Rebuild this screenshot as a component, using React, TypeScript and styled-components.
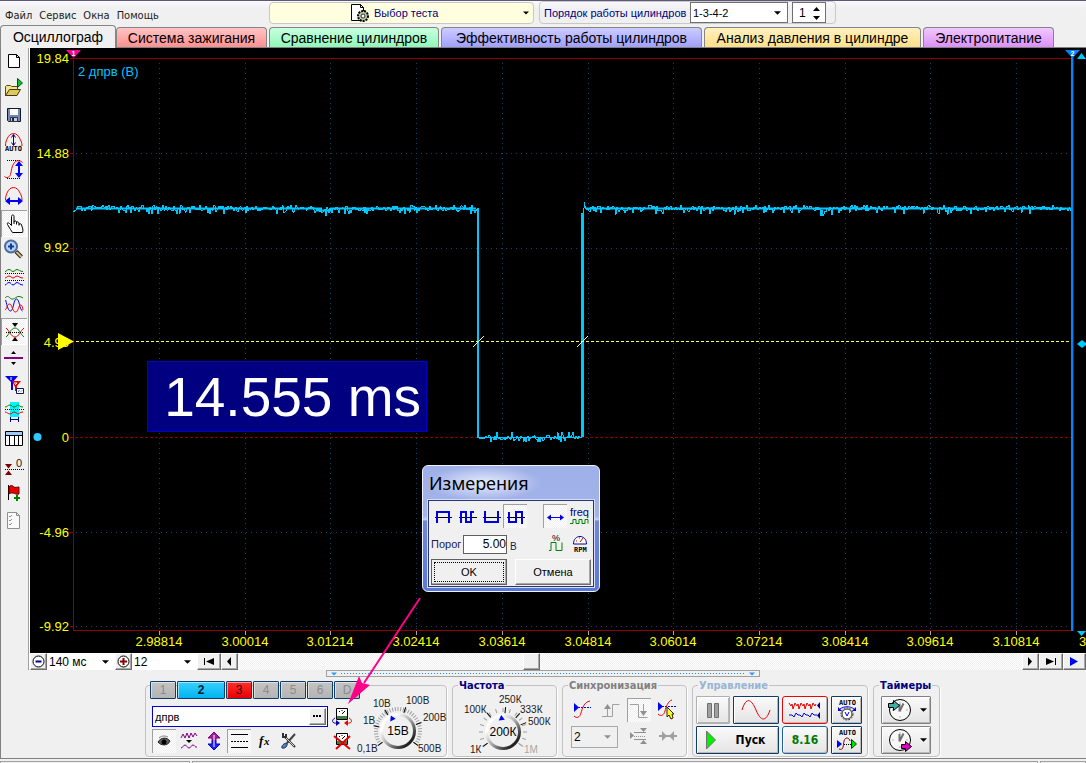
import React from "react";
import styled, { createGlobalStyle, css } from "styled-components";

const sans = '"Liberation Sans", Arial, sans-serif';
const tahoma = '"DejaVu Sans Condensed", "DejaVu Sans", sans-serif';
const face = "#f0f0f0";
const navy = "#000080";

const GlobalStyle = createGlobalStyle`
  * { box-sizing: border-box; }
  body { margin: 0; background: ${face}; font: 12px ${sans}; color: #000; }
  button, input, select { font: inherit; color: inherit; margin: 0; padding: 0; border-radius: 0; }
  svg { display: block; flex: none; }
`;

const hatch = css`
  background: repeating-conic-gradient(#ffffff 0 25%, #efefef 0 50%) 0 0 / 2px 2px;
`;
const raised = css`
  background: ${face};
  border: 1px solid;
  border-color: #fff #6e6e6e #6e6e6e #fff;
  box-shadow: inset -1px -1px 0 #a8a8a8;
`;

const Page = styled.div`
  position: relative;
  display: flex;
  flex-direction: column;
  min-height: 100vh;
  overflow: hidden;
  border-top: 1px solid #5a5a78;
`;

/* Menu line */
const TopBar = styled.header`
  display: flex;
  align-items: flex-start;
  height: 25px;
  background: linear-gradient(#faf8ff, ${face} 8px);
`;
const Menu = styled.nav`
  display: flex;
  gap: 7px;
  width: 269px;
  padding: 8px 0 0 5px;
  font: 11px/14px ${tahoma};
`;
const MenuLink = styled.a`
  color: #1c1c1c;
  text-decoration: none;
`;
const TestPicker = styled.button`
  display: flex;
  align-items: center;
  gap: 4px;
  width: 265px;
  height: 22px;
  margin: 1px 5px 0 0;
  padding: 0 4px 0 80px;
  border: 1px solid #c8c8c8;
  border-radius: 4px;
  background: #ffffdf;
  color: ${navy};
  font-size: 11px;
  text-align: left;
`;
const Grow = styled.span`
  flex: 1;
`;
const OrderBox = styled.div`
  display: flex;
  align-items: center;
  gap: 4px;
  height: 23px;
  padding: 0 9px 0 4px;
  border: 1px solid #c8c8c8;
  border-radius: 4px;
  color: ${navy};
  font-size: 11px;
`;
const OrderLabel = styled.label`
  width: 142px;
  white-space: nowrap;
`;
const Combo = styled.span<{ $w: number; $h: number; $line?: string }>`
  position: relative;
  display: inline-flex;
  width: ${(p) => p.$w}px;
  height: ${(p) => p.$h}px;
  border: ${(p) => (p.$line ? `1px solid ${p.$line}` : "0")};
  background: ${(p) => (p.$line === "#a8a8a8" ? face : "#fff")};
  color: #000;
  select {
    appearance: none;
    width: 100%;
    padding: 0 14px 0 2px;
    border: 0;
    background: transparent;
  }
  svg {
    position: absolute;
    right: 6px;
    top: calc(50% - 2px);
    pointer-events: none;
  }
`;
const Spinner = styled.span`
  display: flex;
  align-items: center;
  width: 34px;
  height: 21px;
  border: 1px solid #707070;
  background: #fff;
  color: #000;
  font-size: 12px;
  input {
    width: 19px;
    border: 0;
    padding-left: 6px;
    background: transparent;
  }
`;

/* Tabs */
const Tabs = styled.nav`
  display: flex;
  align-items: flex-end;
  gap: 2px;
  height: 22px;
  border-bottom: 1px solid #808080;
`;
const Tab = styled.button<{ $w: number; $from: string; $to: string; $on?: boolean }>`
  width: ${(p) => p.$w}px;
  height: ${(p) => (p.$on ? 23 : 20)}px;
  margin-bottom: ${(p) => (p.$on ? -1 : 0)}px;
  margin-right: ${(p) => (p.$on ? -2 : 0)}px;
  border: 1px solid #858585;
  border-bottom: 0;
  border-radius: 4px 4px 0 0;
  background: linear-gradient(${(p) => p.$from}, ${(p) => p.$to});
  font-size: 14px;
  line-height: 18px;
  white-space: nowrap;
`;

/* Main area */
const Workspace = styled.main`
  display: flex;
`;
const ToolBar = styled.aside`
  display: flex;
  flex-direction: column;
  flex: none;
  width: 30px;
  border-left: 1px solid #808080;
  border-right: 1px solid #fff;
  box-shadow: inset -1px 0 0 #a0a0a0;
`;
const Tool = styled.button<{ $on?: boolean }>`
  width: 26px;
  height: 27px;
  border: 0;
  background: transparent;
  padding: 0 1px;
  ${(p) =>
    p.$on &&
    css`
      ${hatch}
      box-shadow: inset 1px 1px 0 #a0a0a0, inset -1px -1px 0 #fff;
    `}
`;
const Stage = styled.div`
  position: relative;
  flex: 1;
  min-width: 0;
`;
const Screen = styled.div`
  background: #000;
  svg {
    width: 100%;
    height: auto;
  }
`;
const Readout = styled.output`
  position: absolute;
  left: 117px;
  top: 313px;
  width: 280px;
  padding: 2px 5px 0 0;
  border: 1px solid #0000c8;
  background: ${navy};
  color: #fff;
  font-size: 55px;
  line-height: 67px;
  text-align: right;
  white-space: nowrap;
`;

/* Measurement dialog */
const Dialog = styled.section`
  position: absolute;
  left: 392px;
  top: 417px;
  width: 178px;
  height: 127px;
  padding: 0 5px 5px;
  border: 1px solid #eef2ff;
  border-radius: 6px;
  background: linear-gradient(#9fb0e8, #a3b3ea 40%, #c3d0f4 43%, #7187dc 44%, #5a78d8);
`;
const DialogTitle = styled.h2`
  width: 112px;
  margin: 0;
  height: 34px;
  padding-left: 1px;
  font: 18px/34px "Noto Sans", sans-serif;
  background: radial-gradient(ellipse, #dde4f9 10%, rgba(200, 212, 245, 0) 72%);
`;
const DialogBody = styled.div`
  height: 87px;
  padding: 1px 2px;
  border: 1px solid #28386e;
  background: ${face};
  outline: 1px solid #d4defa;
`;
const DialogRow = styled.div<{ $h: number; $gap: number }>`
  display: flex;
  align-items: center;
  height: ${(p) => p.$h}px;
  gap: ${(p) => p.$gap}px;
`;
const ModeButton = styled.button<{ $on?: boolean }>`
  width: 24px;
  height: 24px;
  border: 0;
  background: transparent;
  ${(p) =>
    p.$on &&
    css`
      ${hatch}
      box-shadow: inset 1px 1px 0 #a0a0a0;
    `}
`;
const ThresholdInput = styled.input`
  width: 44px;
  height: 19px;
  border: 1px solid #606060;
  background: #fff;
  text-align: right;
`;
const ThresholdLabel = styled.label`
  width: 29px;
  font-size: 11px;
  white-space: nowrap;
  color: #202050;
`;
const Unit = styled.span`
  padding-top: 5px;
  font-size: 10px;
  color: #202050;
`;
const DialogButton = styled.button<{ $primary?: boolean }>`
  ${raised}
  width: 76px;
  height: 26px;
  font-size: 11px;
  border-color: ${(p) => (p.$primary ? "#606060" : "#fff #6e6e6e #6e6e6e #fff")};
  outline: ${(p) => (p.$primary ? "1px dotted #000" : "0")};
  outline-offset: -4px;
`;

/* Time scroll line */
const TimeRow = styled.div`
  display: flex;
  height: 17px;
  ${hatch}
`;
const SmallButton = styled.button<{ $w: number }>`
  ${raised}
  display: flex;
  align-items: center;
  justify-content: center;
  flex: none;
  width: ${(p) => p.$w}px;
  height: 17px;
`;
const Track = styled.div`
  flex: 1;
  display: flex;
  padding-left: 285px;
`;

/* Lower control deck */
const Deck = styled.footer`
  display: flex;
  flex-direction: column;
  align-items: center;
  padding-right: 2px;
  border-left: 1px solid #808080;
  border-bottom: 1px solid #808080;
`;
const Splitter = styled.div`
  display: flex;
  align-items: center;
  gap: 4px;
  width: 434px;
  height: 7px;
  padding: 0 4px;
  border: 1px solid #a0a0a0;
`;
const Dots = styled.span`
  flex: 1;
  height: 1px;
  background: repeating-linear-gradient(90deg, #1e90ff 0 1px, transparent 1px 3px);
`;
const Groups = styled.div`
  display: flex;
  gap: 5px;
  padding: 8px 0 1px;
`;
const Group = styled.section<{ $w: number }>`
  width: ${(p) => p.$w}px;
  height: 72px;
  border: 1px solid #c2c2c2;
  border-radius: 4px;
  box-shadow: 1px 1px 0 #fff;
`;
const GroupTitle = styled.h3<{ $c: string }>`
  width: max-content;
  margin: -6px 0 4px 5px;
  padding: 0 1px;
  background: ${face};
  color: ${(p) => p.$c};
  font: bold 11px/12px ${tahoma};
`;
const Channels = styled.div`
  display: flex;
  gap: 1px;
  margin: -5px 0 0 4px;
`;
const tones = {
  off: ["#c4c4c4", "#b4b4b4", "#8c8c8c"],
  cyan: ["#38d0ff", "#00b4f0", "#001c30"],
  red: ["#ff3030", "#e80000", "#300000"],
};
const Channel = styled.button<{ $tone: keyof typeof tones; $wide?: boolean }>`
  width: ${(p) => (p.$wide ? 48 : 26)}px;
  height: 18px;
  border: 1px solid #103c6c;
  border-radius: 1px;
  box-shadow: inset 1px 1px 0 rgba(255, 255, 255, 0.5);
  background: linear-gradient(${(p) => tones[p.$tone][0]}, ${(p) => tones[p.$tone][1]});
  color: ${(p) => tones[p.$tone][2]};
  font-weight: ${(p) => (p.$wide ? "bold" : "normal")};
  line-height: 14px;
`;
const ChannelBody = styled.div`
  display: flex;
  gap: 4px;
  padding-left: 6px;
`;
const Column = styled.div<{ $gap: number; $top: number; $w: number }>`
  display: flex;
  flex-direction: column;
  width: ${(p) => p.$w}px;
  gap: ${(p) => p.$gap}px;
  padding-top: ${(p) => p.$top}px;
`;
const NameField = styled.div`
  display: flex;
  align-items: center;
  height: 21px;
  padding-right: 1px;
  border: 1px solid #0000d0;
  background: #fff;
  input {
    flex: 1;
    min-width: 0;
    padding-left: 2px;
    border: 0;
    background: transparent;
    font-size: 11px;
  }
`;
const Line = styled.div<{ $gap: number }>`
  display: flex;
  align-items: center;
  gap: ${(p) => p.$gap}px;
`;
const IconButton = styled.button<{ $on?: boolean; $w?: number; $h?: number }>`
  display: flex;
  align-items: center;
  justify-content: center;
  flex: none;
  width: ${(p) => p.$w ?? 24}px;
  height: ${(p) => p.$h ?? 24}px;
  border: 0;
  background: transparent;
  ${(p) =>
    p.$on &&
    css`
      ${hatch}
      box-shadow: inset 1px 1px 0 #a0a0a0;
    `}
`;
const Grid = styled.div<{ $cols: string; $gap: string; $pad: number }>`
  display: grid;
  grid-template-columns: ${(p) => p.$cols};
  gap: ${(p) => p.$gap};
  padding-left: ${(p) => p.$pad}px;
`;
const Push = styled.button<{ $line: string; $span?: number; $round?: number }>`
  display: flex;
  align-items: center;
  justify-content: center;
  grid-column: span ${(p) => p.$span ?? 1};
  height: 28px;
  border: 1px solid ${(p) => p.$line};
  border-radius: ${(p) => p.$round ?? 1}px;
  box-shadow: inset 1px 1px 0 #fff, inset -1px -1px 0 #b8b8b8;
  background: linear-gradient(#fafafa, #e4e4e4);
  font: bold 12px ${tahoma};
`;
const RunLabel = styled.span`
  flex: 1;
  padding-right: 12px;
`;
const Rate = styled.span`
  color: #007800;
`;
const StatusBar = styled.div`
  display: grid;
  grid-template-columns: 190px 1fr 46px;
  gap: 2px;
  padding-top: 2px;
  height: 4px;
  span {
    border: 1px solid #a0a0a0;
    border-bottom: 0;
  }
`;
const Pointer = styled.svg`
  position: absolute;
  left: 340px;
  top: 590px;
  pointer-events: none;
`;

/* Drawing helpers */
const Down = ({ c = "#000", w = 7 }: { c?: string; w?: number }) => (
  <svg width={w} height="4" viewBox="0 0 8 4" aria-hidden="true">
    <path d="M0 0h8L4 4z" fill={c} />
  </svg>
);

const Art = ({ w = 24, h = 27, children }: { w?: number; h?: number; children: React.ReactNode }) => (
  <svg width={w} height={h} viewBox={`0 0 ${w} ${h}`} fill="none" aria-hidden="true">
    {children}
  </svg>
);

const dots = { stroke: "#000", strokeDasharray: "1 1" };

const tools: { name: string; on?: boolean; art: React.ReactNode }[] = [
  {
    name: "Новый",
    art: <path d="M6.5 6.5h8l3 3v10h-11zM14.5 6.5v3h3" fill="#fff" stroke="#000" />,
  },
  {
    name: "Открыть",
    art: (
      <>
        <path d="M3.5 20.5v-9l1-1h4l1 1h6v3" fill="#f4e48c" stroke="#5a4c10" />
        <path d="M3.5 20.5l4-6h11l-3.5 6z" fill="#e0c860" stroke="#40380c" />
        <path d="M15.5 3.5v9l5-4.5z" fill="#10c030" stroke="#005010" />
      </>
    ),
  },
  {
    name: "Сохранить",
    art: (
      <>
        <path d="M5.5 6.5h13v13h-12l-1-1z" fill="#7488b8" stroke="#10182c" />
        <path d="M8 7h8v6H8z" fill="#fff" />
        <path d="M8.5 15.5h7v4h-7z" fill="#c8ccd8" stroke="#303848" />
        <path d="M10 16h2v3h-2z" fill="#202838" />
      </>
    ),
  },
  {
    name: "Авто масштаб",
    art: (
      <>
        <path d="M3.5 17c0-4 1-6 2-8s3-4.500 6-4.500 5 2.500 6 4.500 2.500 4 2.500 8" stroke="#f00000" />
        <path d="M11.5 6v10M9.5 8.5l2-3 2 3M9.5 13.5l2 3 2-3" stroke={navy} />
        <text x="3" y="22" fontSize="7" fontFamily="DejaVu Sans Mono, monospace" fontWeight="bold" fill="#000">
          AUTO
        </text>
      </>
    ),
  },
  {
    name: "Масштаб по вертикали",
    art: (
      <>
        <path d="M5 4.5h13M5 22.5h13" {...dots} />
        <path d="M2.5 20.5c2 2 5 1 6-2s1-9 4-12 6-2 8 0" stroke="#f00000" />
        <path d="M17 6v15" stroke="#0000f0" strokeWidth="2" />
        <path d="M17 5l4 5h-8zM17 22l4-5h-8z" fill="#0000f0" />
      </>
    ),
  },
  {
    name: "Масштаб по горизонтали",
    art: (
      <>
        <path d="M3.5 17c0-4 1-6 2-8s3-4.500 6-4.500 5 2.500 6 4.500 2.500 4 2.500 8" stroke="#f00000" />
        <path d="M6 18h12" stroke="#0000f0" strokeWidth="2" />
        <path d="M3 18l5-4v8zM21 18l-5-4v8z" fill="#0000f0" />
      </>
    ),
  },
  {
    name: "Рука",
    on: true,
    art: (
      <path
        d="M10.5 22.5l-2-3-3-5c-1-2 1-2 2-1l2 2V6.5c0-2 2.500-2 2.500 0V12c0-1.500 2.500-1.500 2.500 0v1c0-1.500 2.500-1.500 2.500.5v1c.5-1 2.500-1 2.500.5 1 3 2 5 1 7.500zM12 12v2M14.5 12v2.5M17 13.5v2"
        fill="#fff"
        stroke="#000"
      />
    ),
  },
  {
    name: "Лупа",
    art: (
      <>
        <path d="M14 14.5l5.5 5.5" stroke="#202020" strokeWidth="4" />
        <path d="M14.5 15l5 5" stroke="#d8c080" strokeWidth="2" />
        <circle cx="9" cy="9.5" r="6" fill="#b4d4f8" stroke="#506c98" strokeWidth="2" />
        <path d="M9 6.5v6M6 9.5h6" stroke="#1038a0" strokeWidth="2" />
      </>
    ),
  },
  {
    name: "Разнести сигналы",
    art: (
      <>
        <path d="M3 7.5c1.500 0 2-2 4-2s2.500 2 4 2 2.500-2 4-2 3 2 6 2" stroke="#008000" />
        <path d="M3 9.5h19M3 16.5h19" {...dots} />
        <path d="M3 14c1.500 0 2-2 4-2s2.500 2 4 2 2.500-2 4-2 3 2 6 2" stroke="#f00000" />
        <path d="M3 21c1.500 0 2-2.500 4-2.500s2.500 2.500 4 2.500 2.500-2.500 4-2.500 3 2.500 6 2.500" stroke="#0000f0" />
      </>
    ),
  },
  {
    name: "Совместить сигналы",
    art: (
      <>
        <path d="M3 7c2-2 3-2 5 0s4 1 6-.5 4-1.500 7 .5" stroke="#008000" />
        <path d="M3.5 9c1 2 2 11 5 11s3-12 6-12 3 11 6 12" stroke="#0000f0" />
        <path d="M3 19c2-1 2-6 4.500-6s3 8 6 8 3-7 5-7 2 3 2.500 5" stroke="#f00000" />
      </>
    ),
  },
  {
    name: "Центрировать",
    on: true,
    art: (
      <>
        <path d="M4 19c3-2 5-9 9-9s5 6 9 9" stroke="#008000" />
        <path d="M4 10c3 2 5 9 9 9s5-6 9-9" stroke="#f00000" />
        <path d="M4 14.5h18" {...dots} />
        <path d="M10 5h6l-3 4zM10 23h6l-3-4z" fill="#000" />
      </>
    ),
  },
  {
    name: "Линия уровня",
    art: (
      <>
        <path d="M9 9h5l-2.500-3zM9 17h5l-2.500 3z" fill="#000" />
        <path d="M2 13h19" stroke="#800080" strokeWidth="2" />
      </>
    ),
  },
  {
    name: "Маркеры",
    art: (
      <>
        <path d="M3 4h13l-5 6v8h-2v-8z" fill="#0000e8" />
        <path d="M10 9h9l-4 5v5h-2v-4z" fill="#e80000" />
        <path d="M9 5v3M12 11h3l-2 2" stroke="#fff" />
        <path d="M14.5 16.5h7v5h-7z" fill="#fff" stroke="#101060" />
        <path d="M16 19.5l1.5-1M19 19.5l1-1" stroke="#404040" />
      </>
    ),
  },
  {
    name: "Диапазон",
    art: (
      <>
        <path d="M8 3h9v20h-9z" fill="#00f4ff" />
        <path d="M3 8c2 0 3-2 5-2s2 2 4 2 3-2 4-2 2 2 5 2" stroke="#008000" />
        <path d="M3 10.5h19" {...dots} />
        <path d="M3 13c2 0 3 2 5 2s2-2 4-2 3 2 4 2 2-2 5-2" stroke="#f00000" />
        <path d="M9 18h7v6h-7z" fill={face} />
        <path d="M8.5 20.5h8M8.5 18v5M16.5 18v5" stroke={navy} />
      </>
    ),
  },
  {
    name: "Таблица",
    art: (
      <>
        <path d="M3.5 5.5h17v14h-17z" fill="#fff" stroke="#000" />
        <path d="M4 6h16v3H4z" fill="#a0c8f8" />
        <path d="M3.5 9.5h17M7.5 9v10M12.5 9v10M16.5 9v10" stroke="#000" />
      </>
    ),
  },
  {
    name: "Установить ноль",
    art: (
      <>
        <text x="14" y="14" fontSize="11" fontFamily="Liberation Sans, sans-serif" fill="#202020">
          0
        </text>
        <path d="M3 16.5h19" {...dots} />
        <path d="M3 11h7l-3.5 4.500zM3 22h7l-3.5-4.500z" fill="#800000" />
      </>
    ),
  },
  {
    name: "Добавить метку",
    art: (
      <>
        <path d="M6.5 5v15" stroke="#000" />
        <path d="M7 7c2-3 4-1 5 0s3 0 5 0v7c-3 1-4-1-6-1s-3 0-4 1z" fill="#e80000" stroke="#600000" />
        <path d="M15 15v6M12 18h6" stroke="#008000" strokeWidth="2" />
      </>
    ),
  },
  {
    name: "Список",
    art: (
      <>
        <path d="M5.5 5.5h9l3 3v13h-12zM14.5 5.5v3h3" fill="#fafafa" stroke="#909090" />
        <path d="M7 9l1 1 2-2M7 13l1 1 2-2M7 17l1 1 2-2" stroke="#909090" />
      </>
    ),
  },
];

/* Oscillogram, drawn in the coordinates of the black screen */
const noise = (i: number) => {
  const v = Math.sin(i * 12.9898) * 43758.5453;
  return v - Math.floor(v);
};

const trace = (from: number, to: number, level: number, down: number, up: number) => {
  let d = "";
  for (let x = from; x <= to; x += 1) {
    const dip = Math.abs(x - 293) < 10 || Math.abs(x - 793) < 10 ? 2 : 0;
    const n = noise(x);
    const swing = (n - 0.5) * 6;
    const jitter = n > 0.9 ? down * (0.5 + noise(x + 3) / 2) : n < 0.06 ? -up : swing;
    d += `L${x} ${(level + dip + jitter).toFixed(1)}`;
  }
  return d;
};

const wave =
  "M43 164L46 162" +
  trace(48, 446, 160.5, 6, 3) +
  "L448 161L448 389" +
  trace(450, 550, 389.5, 5, 5) +
  "L552 389L554 160L554 154L556 161" +
  trace(558, 1042, 160.5, 6, 3);

const gridX = [129, 215, 300, 386, 472, 558, 643, 729, 815, 900, 986];
const timeLabels = [
  "2.98814", "3.00014", "3.01214", "3.02414", "3.03614", "3.04814",
  "3.06014", "3.07214", "3.08414", "3.09614", "3.10814",
];
const voltLabels = ["19.84", "14.88", "9.92", "4.96", "0", "-4.96", "-9.92"];

const Oscillogram = () => (
  <svg viewBox="0 0 1056 605" fill="none" role="img" aria-label="Осциллограмма">
    <g shapeRendering="crispEdges">
      {gridX.map((x) => (
        <path key={x} d={`M${x + 0.5} 15V582`} stroke="#0c4870" strokeDasharray="1 4" />
      ))}
      {[105, 200, 484, 578].map((y) => (
        <path key={y} d={`M46 ${y + 0.5}H1042`} stroke="#0c4870" strokeDasharray="1 4" />
      ))}
      <path d="M43.5 8V583M40 10.5H1043M43 582.5H1043M1043.5 8V583" stroke="#900000" />
      <path d="M40 389.5H1043" stroke="#900000" strokeDasharray="3 2" />
      {[105, 200, 294, 484, 578].map((y) => (
        <path key={y} d={`M40 ${y + 0.5}h4`} stroke="#900000" />
      ))}
      {gridX.map((x) => (
        <path key={x} d={`M${x + 0.5} 583v4`} stroke="#a8a8a8" />
      ))}
    </g>
    <g fontFamily="Liberation Sans, sans-serif" fontSize="13" fill="#ffff00">
      {voltLabels.map((t, i) => (
        <text key={t} x="39" y={Math.round(15 + i * 94.7)} textAnchor="end">
          {t}
        </text>
      ))}
      {timeLabels.map((t, i) => (
        <text key={t} x={gridX[i]} y="598" textAnchor="middle">
          {t}
        </text>
      ))}
      <text x="1049" y="598">3</text>
      <text x="48" y="28" fill="#00c4ff">
        2 дпрв (В)
      </text>
    </g>
    <path d={wave} stroke="#00c8ff" strokeLinejoin="bevel" shapeRendering="crispEdges" />
    <path
      d="M46 160.500H292M286 162.500h16M300 160.500H446M556 160.500H1042"
      stroke="#00c8ff"
      strokeWidth="2"
    />
    <path d="M448 160V390" stroke="#00c8ff" strokeWidth="2" />
    <path d="M552.500 165V389" stroke="#00c8ff" strokeWidth="3" />
    <path d="M448 389.500H552" stroke="#00c8ff" />
    <path d="M46 293.500H1042" stroke="#ffff50" strokeDasharray="3 2" shapeRendering="crispEdges" />
    <path d="M443 299l11-11M547 299l11-11" stroke="#ffffa0" />
    <path d="M28 285v17l16-8.500z" fill="#ffff00" />
    <circle cx="7.500" cy="389" r="4" fill="#30c8ff" />
    <path d="M1042 8V583" stroke="#0084ff" strokeWidth="2" />
    <path d="M36 2h15l-7.500 8z" fill="#ff0090" />
    <path d="M1035 2h15l-7.500 8z" fill="#0084ff" />
    <g fontFamily="Liberation Sans, sans-serif" fontSize="7" fontWeight="bold" fill="#fff" textAnchor="middle">
      <text x="43.500" y="8">1</text>
      <text x="1042.500" y="8">2</text>
    </g>
    <g fill="#00c8ff">
      <path d="M1047 11h9l-4.500-6z" />
      <path d="M1047 296l5-4 4 3v2l-4 3z" />
      <path d="M1047 583h9l-4.500 5z" />
    </g>
  </svg>
);

/* Rotary knob with scale */
type Mark = { t: string; x: number; y: number; a: number; c?: string };
const Knob = ({
  w, cx, cy, value, marks, pointer, step, label,
}: {
  w: number; cx: number; cy: number; value: string; marks: Mark[]; pointer: number; step: number; label: string;
}) => {
  const ticks: number[] = [];
  for (let a = -126; a <= 126; a += step) ticks.push(a);
  return (
    <svg width={w} height="56" viewBox={`0 0 ${w} 56`} overflow="visible" role="img" aria-label={label}>
      <defs>
        <linearGradient id={`rim${w}`} x1="0.1" y1="0.1" x2="0.9" y2="0.9">
          <stop offset="0.2" stopColor="#fdfdfd" />
          <stop offset="0.5" stopColor="#b0b0b0" />
          <stop offset="0.9" stopColor="#202020" />
        </linearGradient>
      </defs>
      {ticks.map((a) => (
        <path key={a} d={`M${cx} ${cy - 20}v-4`} stroke="#a0a0a0" transform={`rotate(${a} ${cx} ${cy})`} />
      ))}
      {marks.map((m) => (
        <path
          key={m.t}
          d={`M${cx} ${cy - 19}v-6`}
          stroke={m.c ?? "#000"}
          transform={`rotate(${m.a} ${cx} ${cy})`}
        />
      ))}
      <circle cx={cx} cy={cy} r="18" fill={`url(#rim${w})`} />
      <circle cx={cx} cy={cy} r="15" fill="#f0f0f0" />
      <path
        d={`M${cx} ${cy - 17}l3 5h-6z`}
        fill="#0000e8"
        transform={`rotate(${pointer} ${cx} ${cy})`}
      />
      <g fontFamily="Liberation Sans, sans-serif">
        <text x={cx} y={cy + 4} textAnchor="middle" fontSize="12" fill="#000">
          {value}
        </text>
        {marks.map((m) => (
          <text key={m.t} x={m.x} y={m.y} fontSize="10" fill={m.c ?? "#202020"}>
            {m.t}
          </text>
        ))}
      </g>
    </svg>
  );
};

const Clock = () => (
  <>
    <circle cx="14" cy="12" r="10.500" fill="#f8f8f8" stroke="#000" />
    <path d="M14 4v2M14 18v2M6 12h2M20 12h2" stroke="#b0b0b0" />
    <path d="M13.500 13.500V6M13.500 13.500l4-8" stroke="#707070" strokeWidth="2" />
  </>
);
const Gauge = () => (
  <>
    <path d="M5.500 2.500h11v11h-11z" fill="#fff" stroke="#000" />
    <path d="M8 5l1 1M11 4v1M14 5l-1 1M11 8l2-2" stroke="#000" />
    <path d="M6 10h10v3H6z" fill="#408040" />
  </>
);

export default function App() {
  return (
    <Page>
      <GlobalStyle />
      <TopBar>
        <Menu>
          {["Файл", "Сервис", "Окна", "Помощь"].map((t) => (
            <MenuLink key={t} href="#">
              {t}
            </MenuLink>
          ))}
        </Menu>
        <TestPicker>
          <Art w={20} h={20}>
            <path d="M1.500 1.500h9l3 3v13h-12zM10.500 1.500v3h3" fill="#fff" stroke="#000" />
            <circle cx="13" cy="13" r="5" fill="#b8c8a8" stroke="#000" strokeDasharray="2 1" strokeWidth="2" />
            <circle cx="13" cy="13" r="2" fill="#fff" stroke="#303030" />
          </Art>
          <Grow>Выбор теста</Grow>
          <Down w={6} />
        </TestPicker>
        <OrderBox>
          <OrderLabel htmlFor="order">Порядок работы цилиндров</OrderLabel>
          <Combo $w={98} $h={21} $line="#707070">
            <select id="order" defaultValue="a">
              <option value="a">1-3-4-2</option>
            </select>
            <Down />
          </Combo>
          <Spinner>
            <input aria-label="Цилиндр" defaultValue="1" />
            <Art w={9} h={14}>
              <path d="M1 5h7L4.500 1zM1 10h7l-3.500 4z" fill="#000" />
            </Art>
          </Spinner>
        </OrderBox>
      </TopBar>
      <Tabs>
        <Tab $on $w={116} $from={face} $to={face}>Осциллограф</Tab>
        <Tab $w={151} $from="#ffc4c4" $to="#ff9090">Система зажигания</Tab>
        <Tab $w={170} $from="#c8ffe0" $to="#90f8b8">Сравнение цилиндров</Tab>
        <Tab $w={261} $from="#ccccff" $to="#a0a0ff">Эффективность работы цилиндров</Tab>
        <Tab $w={217} $from="#fff0c0" $to="#ffe088">Анализ давления в цилиндре</Tab>
        <Tab $w={131} $from="#f0c8ff" $to="#dc90f8">Электропитание</Tab>
      </Tabs>

      <Workspace>
        <ToolBar>
          {tools.map((t) => (
            <Tool key={t.name} $on={t.on} aria-label={t.name}>
              <Art>{t.art}</Art>
            </Tool>
          ))}
        </ToolBar>
        <Stage>
          <Screen>
            <Oscillogram />
          </Screen>
          <Readout>14.555 ms</Readout>
          <Dialog aria-label="Измерения">
            <DialogTitle>Измерения</DialogTitle>
            <DialogBody>
              <DialogRow $h={28} $gap={0}>
                <ModeButton aria-label="Положительный импульс">
                  <Art w={24} h={24}>
                    <path d="M4 13.500h17" stroke="#000" />
                    <path d="M6 19V8h12v11" stroke="#0000e0" strokeWidth="2" />
                  </Art>
                </ModeButton>
                <ModeButton aria-label="Период по спаду">
                  <Art w={24} h={24}>
                    <path d="M4 13.500h18" stroke="#000" />
                    <path d="M6 19V8h5v10h5V8h3" stroke="#0000e0" strokeWidth="2" />
                  </Art>
                </ModeButton>
                <ModeButton aria-label="Отрицательный импульс">
                  <Art w={24} h={24}>
                    <path d="M4 13.500h18" stroke="#000" />
                    <path d="M6 7v11h13V7" stroke="#0000e0" strokeWidth="2" />
                  </Art>
                </ModeButton>
                <ModeButton $on aria-label="Период по фронту">
                  <Art w={24} h={24}>
                    <path d="M4 13.500h18" stroke="#000" />
                    <path d="M6 8v10h7V8h6v12" stroke="#0000e0" strokeWidth="2" />
                  </Art>
                </ModeButton>
                <Grow />
                <ModeButton $on aria-label="Длительность">
                  <Art w={24} h={24}>
                    <path d="M5 13.500h15" stroke="#0000e0" />
                    <path d="M4 13.500l4-3v6zM21 13.500l-4-3v6z" fill="#0000e0" />
                  </Art>
                </ModeButton>
                <ModeButton aria-label="Частота">
                  <Art w={24} h={24}>
                    <text x="3" y="12" fontSize="11" fontFamily="Liberation Sans, sans-serif" fill={navy}>
                      freq
                    </text>
                    <path d="M3 19.500h3v-4h3v4h3v-4h3v4h3v-4h3v4" stroke="#008000" />
                  </Art>
                </ModeButton>
              </DialogRow>
              <DialogRow $h={28} $gap={3}>
                <ThresholdLabel htmlFor="level">Порог</ThresholdLabel>
                <ThresholdInput id="level" defaultValue="5.00" />
                <Unit>В</Unit>
                <Grow />
                <Art w={48} h={24}>
                  <text x="9" y="9" fontSize="9" fontFamily="Liberation Sans, sans-serif" fill="#000">
                    %
                  </text>
                  <path d="M6 18.500h2v-8h5v8h6v-8" stroke="#008000" />
                  <path d="M30.500 12c0-10 13-10 13 0z" fill="#fff" stroke={navy} />
                  <path d="M37 10l3-4M33 9h1M36 6h1" stroke="#e00000" />
                  <text x="31" y="20" fontSize="7" fontFamily="DejaVu Sans Mono, monospace" fontWeight="bold" fill="#000">
                    RPM
                  </text>
                </Art>
              </DialogRow>
              <DialogRow $h={27} $gap={8}>
                <DialogButton $primary>OK</DialogButton>
                <DialogButton>Отмена</DialogButton>
              </DialogRow>
            </DialogBody>
          </Dialog>
          <TimeRow>
            <SmallButton $w={17} aria-label="Сжать">
              <Art w={15} h={15}>
                <circle cx="7.500" cy="7.500" r="5.500" stroke="#000" fill="#fff" />
                <path d="M4.500 7.500h6" stroke="#000090" strokeWidth="2" />
              </Art>
            </SmallButton>
            <Combo $w={68} $h={17}>
              <select aria-label="Длительность экрана" defaultValue="a">
                <option value="a">140 мс</option>
              </select>
              <Down />
            </Combo>
            <SmallButton $w={17} aria-label="Растянуть">
              <Art w={15} h={15}>
                <circle cx="7.500" cy="7.500" r="5.500" stroke="#000" fill="#fff" />
                <path d="M4 7.500h7M7.500 4v7" stroke="#900000" strokeWidth="2" />
              </Art>
            </SmallButton>
            <Combo $w={65} $h={17}>
              <select aria-label="Число делений" defaultValue="a">
                <option value="a">12</option>
              </select>
              <Down />
            </Combo>
            <SmallButton $w={24} aria-label="В начало">
              <Art w={12} h={9}>
                <path d="M1 1h1v7H1zM11 1v7L3 4.500z" fill="#000" />
              </Art>
            </SmallButton>
            <SmallButton $w={17} aria-label="Назад">
              <Art w={5} h={9}>
                <path d="M4 0v9L0 4.500z" fill="#000" />
              </Art>
            </SmallButton>
            <Track>
              <SmallButton $w={17} aria-label="Положение" />
            </Track>
            <SmallButton $w={17} aria-label="Вперёд">
              <Art w={5} h={9}>
                <path d="M0 0v9l4-4.500z" fill="#000" />
              </Art>
            </SmallButton>
            <SmallButton $w={24} aria-label="В конец">
              <Art w={12} h={9}>
                <path d="M1 1v7l8-3.500zM10 1h1v7h-1z" fill="#000" />
              </Art>
            </SmallButton>
            <SmallButton $w={23} aria-label="Воспроизвести">
              <Art w={9} h={9}>
                <path d="M0 0v9l8-4.500z" fill="#0000f0" />
              </Art>
            </SmallButton>
          </TimeRow>
        </Stage>
      </Workspace>

      <Deck>
        <Splitter>
          <Down c="#2c96ff" w={6} />
          <Dots />
          <Down c="#2c96ff" w={6} />
        </Splitter>
        <Groups>
          <Group $w={302}>
            <Channels>
              <Channel $tone="off">1</Channel>
              <Channel $tone="cyan" $wide>2</Channel>
              <Channel $tone="red">3</Channel>
              <Channel $tone="off">4</Channel>
              <Channel $tone="off">5</Channel>
              <Channel $tone="off">6</Channel>
              <Channel $tone="off">D</Channel>
            </Channels>
            <ChannelBody>
              <Column $w={177} $gap={2} $top={7}>
                <NameField>
                  <input aria-label="Имя канала" defaultValue="дпрв" />
                  <SmallButton $w={17} aria-label="Выбрать имя">
                    <Art w={9} h={3}>
                      <path d="M0 0h2v2H0zM3 0h2v2H3zM6 0h2v2H6z" fill="#000" />
                    </Art>
                  </SmallButton>
                </NameField>
                <Line $gap={1}>
                  <IconButton $on aria-label="Показать">
                    <Art w={16} h={14}>
                      <path d="M2 8c3-5 9-5 12-1-2 5-9 5-12 1z" fill="#606060" stroke="#202020" />
                      <circle cx="8" cy="8" r="2.500" fill="#000" />
                      <path d="M3 4c3-3 7-2 9-1" stroke="#808080" />
                    </Art>
                  </IconButton>
                  <IconButton aria-label="Сгладить">
                    <Art w={18} h={20}>
                      <path d="M1 7l2-4 2 4 2-5 2 5 2-5 2 4 2-4 2 3" stroke="#800080" />
                      <path d="M6 9h6l-3 3z" fill="#000" />
                      <path d="M1 17c2 0 2-3 4-3s2 3 4 3 2-3 4-3 2 3 4 2" stroke="#800080" />
                    </Art>
                  </IconButton>
                  <IconButton aria-label="Инвертировать">
                    <Art w={16} h={20}>
                      <path d="M8 1l6 6h-4v3H6V7H2z" fill="#a020a0" stroke="#800080" />
                      <path d="M8 19l6-6h-4v-3H6v3H2z" fill="#2020ff" stroke="#0000c0" />
                      <path d="M8 4v12" stroke="#fff" />
                    </Art>
                  </IconButton>
                  <IconButton $on aria-label="Линии">
                    <Art w={18} h={16}>
                      <path d="M1 1.500h17M1 14.500h17" stroke="#000" />
                      <path d="M1 8.500h17" stroke="#000" strokeDasharray="2 1" />
                    </Art>
                  </IconButton>
                  <IconButton aria-label="Функция">
                    <Art w={16} h={16}>
                      <text x="3" y="12" fontSize="13" fontFamily="Liberation Serif, serif" fontStyle="italic" fontWeight="bold" fill="#000">
                        f
                      </text>
                      <text x="8" y="12" fontSize="11" fontFamily="Liberation Serif, serif" fontStyle="italic" fontWeight="bold" fill="#000">
                        x
                      </text>
                    </Art>
                  </IconButton>
                  <IconButton aria-label="Настройка">
                    <Art w={16} h={16}>
                      <path d="M14 1l-8 9" stroke="#404040" strokeWidth="2" />
                      <path d="M1 15c-1-2 2-5 5-5 1 3-2 6-5 5z" fill="#5080c0" stroke="#203050" />
                      <path d="M2 0v4h3V1M4 4l10 10" stroke="#303030" strokeWidth="2" />
                      <path d="M5 5l8 8" stroke="#d8d8d8" />
                    </Art>
                  </IconButton>
                </Line>
              </Column>
              <Column $w={20} $gap={4} $top={7}>
                <IconButton $w={20} $h={21} aria-label="Прибор">
                  <Art w={22} h={21}>
                    <Gauge />
                    <path d="M4 12c-4 2-3 6 2 5" stroke="#0000a0" />
                    <path d="M5 14v6l4-3z" fill="#0000a0" />
                    <path d="M18 12c4 2 3 6-2 5" stroke="#f00000" />
                    <path d="M17 14v6l-4-3z" fill="#f00000" />
                  </Art>
                </IconButton>
                <IconButton $w={20} $h={21} aria-label="Убрать прибор">
                  <Art w={22} h={21}>
                    <Gauge />
                    <path d="M3 5l16 13M19 5L5 18" stroke="#e80000" strokeWidth="2" />
                  </Art>
                </IconButton>
              </Column>
              <Knob
                w={90}
                cx={42}
                cy={32}
                value="15В"
                label="Диапазон напряжения"
                pointer={-25}
                step={7}
                marks={[
                  { t: "0,1В", x: 1, y: 53, a: -126 },
                  { t: "1В", x: 7, y: 25, a: -78 },
                  { t: "10В", x: 17, y: 8, a: -32 },
                  { t: "100В", x: 50, y: 5, a: 18 },
                  { t: "200В", x: 67, y: 22, a: 70 },
                  { t: "500В", x: 62, y: 53, a: 126 },
                ]}
              />
            </ChannelBody>
          </Group>

          <Group $w={105}>
            <GroupTitle $c={navy}>Частота</GroupTitle>
            <Grid $cols="1fr" $gap="0" $pad={10}>
              <Knob
                w={91}
                cx={40}
                cy={36}
                value="200К"
                label="Частота"
                pointer={-6}
                step={18}
                marks={[
                  { t: "1К", x: 7, y: 57, a: -126 },
                  { t: "100К", x: 1, y: 17, a: -40 },
                  { t: "250К", x: 36, y: 7, a: 6 },
                  { t: "333К", x: 57, y: 17, a: 42 },
                  { t: "500К", x: 65, y: 29, a: 68 },
                  { t: "1М", x: 61, y: 57, a: 126, c: "#a8a8a8" },
                ]}
              />
            </Grid>
          </Group>

          <Group $w={125}>
            <GroupTitle $c="#808080">Синхронизация</GroupTitle>
            <Column $w={122} $gap={4} $top={2}>
              <Grid $cols="24px 24px 24px 24px" $gap="4px" $pad={8}>
                <IconButton aria-label="Уровень">
                  <Art w={20} h={22}>
                    <path d="M5 8.500h13" stroke="#0000f0" strokeDasharray="2 1" />
                    <path d="M1 4v9l5-4.500z" fill="#0000f0" />
                    <path d="M1 17c3 3 6 1 7-3s3-11 9-12" stroke="#f00000" />
                  </Art>
                </IconButton>
                <IconButton aria-label="Фронт">
                  <Art w={20} h={22}>
                    <path d="M1 17.500h10.500v-12h7" stroke="#a0a0a0" />
                    <path d="M6.500 17V7" stroke="#a0a0a0" />
                    <path d="M3 10h7L6.500 5z" fill="#909090" />
                  </Art>
                </IconButton>
                <IconButton $on aria-label="Спад">
                  <Art w={20} h={22}>
                    <path d="M1 5.500h8.500v13h9" stroke="#a0a0a0" />
                    <path d="M14.500 5v10" stroke="#a0a0a0" />
                    <path d="M11 12h7l-3.500 5z" fill="#909090" />
                  </Art>
                </IconButton>
                <IconButton aria-label="Указать">
                  <Art w={20} h={22}>
                    <path d="M5 7.500h14" stroke="#0000f0" strokeDasharray="2 1" />
                    <path d="M1 3v9l5-4.500z" fill="#0000f0" />
                    <path d="M1 15c3 3 6 1 7-3s3-10 7-11" stroke="#f00000" />
                    <path d="M10 8v10l2-2 2 4 2-1-1-4h2z" fill="#ffff20" stroke="#302000" />
                  </Art>
                </IconButton>
              </Grid>
              <Grid $cols="47px 24px 24px" $gap="8px 5px" $pad={8}>
                <Combo $w={47} $h={22} $line="#a8a8a8">
                  <select aria-label="Канал" defaultValue="a">
                    <option value="a">2</option>
                  </select>
                  <Down c="#909090" />
                </Combo>
                <IconButton $w={32} $h={20} aria-label="Расширить">
                  <Art w={20} h={18}>
                    <path d="M5 5.500h12M5 12.500h12" stroke="#909090" />
                    <path d="M5 9.500h12" stroke="#909090" strokeDasharray="1 1" />
                    <path d="M1 5v7l4-3.500zM11 1h7l-3.500 4zM11 17h7l-3.500-4z" fill="#909090" />
                  </Art>
                </IconButton>
                <IconButton $w={32} $h={20} aria-label="Сдвинуть">
                  <Art w={20} h={18}>
                    <path d="M1 9h18" stroke="#a0a0a0" strokeWidth="2" />
                    <path d="M4 4v10l5-5zM16 4v10l-5-5z" fill="#a0a0a0" />
                  </Art>
                </IconButton>
              </Grid>
            </Column>
          </Group>

          <Group $w={176}>
            <GroupTitle $c="#98b4d4">Управление</GroupTitle>
            <Grid $cols="34px 46px 46px 31px" $gap="2px 3px" $pad={3}>
              <Push $line="#b0b0b0" aria-label="Пауза">
                <Art w={12} h={15}>
                  <path d="M.5 .5h4v14h-4zM7.500 .5h4v14h-4z" fill="#a0a0a0" stroke="#707070" />
                </Art>
              </Push>
              <Push $line="#103c6c" aria-label="Генератор">
                <Art w={30} h={20}>
                  <path d="M1 10C5-3 10-2 15 10s10 12 14 0" stroke="#e80000" />
                </Art>
              </Push>
              <Push $line="#f00000" $round={3} aria-label="Сигналы">
                <Art w={34} h={18}>
                  <path d="M1 2l2 3 1-2 1 5 2-6 2 3 1-2 1 5 2-6 2 3 1-2 1 5 2-6 2 3 1-2 1 5 2-6 2 3 1-2" stroke="#e80000" />
                  <path d="M1 14h3l2 2 2-4 2 2h2l2 2 2-4 2 2h2l2 2 2-4 2 2h3" stroke="#0000e0" />
                  <path d="M32 1v7l-3-3.500zM32 11v7l-3-3.500z" fill={navy} />
                </Art>
              </Push>
              <Push $line="#103c6c" aria-label="Авто уровень">
                <Art w={24} h={24}>
                  <text x="4" y="7" fontSize="7" fontFamily="DejaVu Sans Mono, monospace" fontWeight="bold" fill="#000">
                    AUTO
                  </text>
                  <circle cx="12" cy="16" r="6" fill="#fff" stroke="#303030" strokeDasharray="2 1" />
                  <circle cx="12" cy="16" r="5" fill="#fff" stroke="#303030" />
                  <path d="M10 14l2 4 2-4" stroke="#0000e0" />
                  <path d="M5 11c4-3 10-3 14 0" stroke="#0000e0" />
                  <path d="M3 9v4h4zM21 9v4h-4z" fill="#0000e0" />
                </Art>
              </Push>
              <Push $line="#103c6c" $span={2}>
                <Art w={38} h={20}>
                  <path d="M9.500 1v18l9-9z" fill="#00f000" stroke="#707070" />
                </Art>
                <RunLabel>Пуск</RunLabel>
              </Push>
              <Push $line="#2060a0" $round={3}>
                <Rate>8.16</Rate>
              </Push>
              <Push $line="#103c6c" aria-label="Авто синхронизация">
                <Art w={24} h={24}>
                  <text x="4" y="7" fontSize="7" fontFamily="DejaVu Sans Mono, monospace" fontWeight="bold" fill="#000">
                    AUTO
                  </text>
                  <path d="M2 12v8l5-4z" fill="#0000f0" />
                  <path d="M4 21c5 2 4-4 5-8s5-4 6 0" stroke="#900000" />
                  <path d="M9 16.500h7" {...dots} />
                  <path d="M16.500 11.500v9l5-4.500z" fill="#00e000" stroke="#004000" />
                </Art>
              </Push>
            </Grid>
          </Group>

          <Group $w={67}>
            <GroupTitle $c={navy}>Таймеры</GroupTitle>
            <Grid $cols="50px" $gap="2px" $pad={7}>
              <Push $line="#808080" aria-label="Таймер пуска">
                <Art w={34} h={24}>
                  <Clock />
                  <path d="M2.500 5.500h5v-3l6 5-6 5v-3h-5z" fill="#40b0a0" stroke="#000" />
                </Art>
                <Down />
              </Push>
              <Push $line="#808080" aria-label="Таймер останова">
                <Art w={34} h={24}>
                  <Clock />
                  <path d="M15.500 16.500h4v-3l6 5-6 5v-3h-4z" fill="#e000c0" stroke="#000" />
                </Art>
                <Down />
              </Push>
            </Grid>
          </Group>
        </Groups>
      </Deck>
      <StatusBar>
        <span />
        <span />
        <span />
      </StatusBar>
      <Pointer width="90" height="120" viewBox="0 0 90 120" aria-hidden="true">
        <path d="M80 7L24 92" stroke="#ff0088" strokeWidth="2" />
        <path d="M8 113l11-28 3 7 8 2z" fill="#ff0088" />
      </Pointer>
    </Page>
  );
}
